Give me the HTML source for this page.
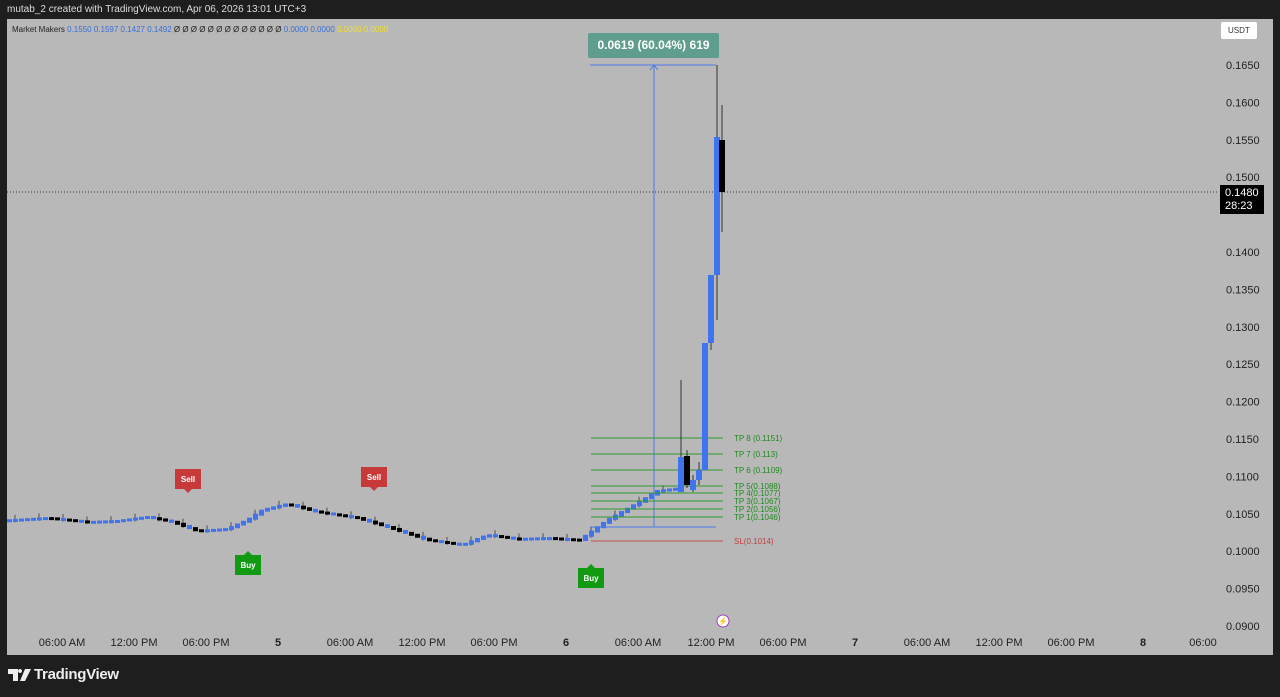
<!DOCTYPE html>
<html><head><meta charset="utf-8"><style>
*{margin:0;padding:0}
body{width:1280px;height:697px;background:#1e1e1e;position:relative;overflow:hidden;font-family:"Liberation Sans",sans-serif}
.t{position:absolute;white-space:nowrap}
</style></head><body>
<div class="t" style="left:7px;top:4px;font-size:10px;color:#ddd">mutab_2 created with TradingView.com, Apr 06, 2026 13:01 UTC+3</div>
<div style="position:absolute;left:7px;top:19px;width:1266px;height:636px;background:#b8b8b8"></div>
<svg id="s" width="1280" height="697" style="position:absolute;left:0;top:0" font-family="Liberation Sans, sans-serif"></svg>
<div class="t" style="left:12px;top:25px;font-size:8px;color:#222">Market Makers <span style="color:#3a6fd8">0.1550 0.1597 0.1427 0.1492</span> Ø Ø Ø Ø Ø Ø Ø Ø Ø Ø Ø Ø Ø <span style="color:#3a6fd8">0.0000 0.0000</span> <span style="color:#f0e020">0.0000 0.0000</span></div>
<div class="t" style="left:1221px;top:22px;width:36px;height:17px;background:#fff;border-radius:2px;font-size:8px;line-height:17px;padding-left:7px;box-sizing:border-box;color:#333">USDT</div>
<div class="t" style="left:588px;top:33px;width:131px;height:25px;background:#5f9e8f;border-radius:2px;color:#fff;font-size:12px;font-weight:bold;line-height:25px;text-align:center">0.0619 (60.04%) 619</div>
<div class="t" style="left:1220px;top:185px;width:44px;height:29px;background:#000;color:#fff;font-size:11px;line-height:13px;padding:2px 0 0 5px;box-sizing:border-box">0.1480<br>28:23</div>
<svg style="position:absolute;left:8px;top:669px" width="24" height="14"><path d="M0 0h10v12h-5v-7h-5z M12 0a2 2 0 1 0 0.1 0z M17 0h6l-6 12h-5z" fill="#eee"/></svg>
<div class="t" style="left:34px;top:666px;color:#eee;font-size:15px;font-weight:bold;letter-spacing:-0.3px">TradingView</div>
<script>
const s=document.getElementById('s');let h='';
const Y=p=>65+(0.165-p)/0.005*37.4;
for(let i=0;i<16;i++){const p=0.165-i*0.005;if(Math.abs(p-0.1450)<1e-6)continue;h+=`<text x="1226" y="${Y(p)+4}" font-size="11" fill="#222">${p.toFixed(4)}</text>`;}
[[62,'06:00 AM'],[134,'12:00 PM'],[206,'06:00 PM'],[278,'5'],[350,'06:00 AM'],[422,'12:00 PM'],[494,'06:00 PM'],[566,'6'],[638,'06:00 AM'],[711,'12:00 PM'],[783,'06:00 PM'],[855,'7'],[927,'06:00 AM'],[999,'12:00 PM'],[1071,'06:00 PM'],[1143,'8'],[1203,'06:00']].forEach(([x,t])=>h+=`<text x="${x}" y="646" font-size="11" fill="#222" text-anchor="middle" ${/^[5-8]$/.test(t)?'font-weight="bold"':''}>${t}</text>`);
h+=`<line x1="7" y1="192" x2="1218" y2="192" stroke="#333" stroke-dasharray="1,2"/>`;
const pts=[[0,521],[50,518],[90,522],[120,521],[150,517],[175,522],[200,531],[230,529],[250,520],[265,510],[290,504],[320,512],[360,518],[390,527],[430,540],[465,545],[490,535],[520,539],[550,538],[582,540],[592,533],[610,520],[640,503],[660,491],[700,486]];
function yat(x){for(let i=0;i<pts.length-1;i++){const[a,b]=pts[i],[c,d]=pts[i+1];if(x>=a&&x<=c)return b+(d-b)*(x-a)/(c-a);}return 486;}
let k=0;for(let x=9;x<=676;x+=6,k++){const y0=yat(x-3),y1=yat(x+3);const up=y1<y0||(k%3==0);const c=up?'#3f73f0':'#000';const t=Math.min(y0,y1)-1,b=Math.max(y0,y1)+1;if(k%4==1)h+=`<line x1="${x}" y1="${t-4}" x2="${x}" y2="${b+1}" stroke="#333" stroke-width="0.8"/>`;h+=`<rect x="${x-2}" y="${t}" width="5" height="${Math.max(3,b-t)}" fill="${c}"/>`;}
h+=`<g stroke="#4a78e8" stroke-width="1"><line x1="654" y1="65" x2="654" y2="527"/><line x1="590" y1="65" x2="716" y2="65"/><line x1="590" y1="527" x2="716" y2="527"/><polyline points="650,70 654,65 658,70" fill="none"/></g>`;
[[438,'TP 8 (0.1151)'],[454,'TP 7 (0.113)'],[470,'TP 6 (0.1109)'],[486,'TP 5(0.1088)'],[493,'TP 4(0.1077)'],[501,'TP 3(0.1067)'],[509,'TP 2(0.1056)'],[517,'TP 1(0.1046)']].forEach(([y,t])=>h+=`<line x1="591" y1="${y}" x2="723" y2="${y}" stroke="#2e9a2e"/><text x="734" y="${y+3}" font-size="8" fill="#1f8a1f">${t}</text>`);
h+=`<line x1="591" y1="541" x2="723" y2="541" stroke="#c05050"/><text x="734" y="544" font-size="8" fill="#c04040">SL(0.1014)</text>`;
[[681,380,457,492,492,'#3f73f0'],[687,450,456,485,488,'#000'],[693,475,480,490,492,'#3f73f0'],[699,462,470,480,485,'#3f73f0'],[705,343,343,470,470,'#3f73f0'],[711,290,275,343,350,'#3f73f0'],[717,65,137,275,320,'#3f73f0'],[722,105,140,192,232,'#000']].forEach(([x,w1,t,b,w2,c])=>h+=`<line x1="${x}" y1="${w1}" x2="${x}" y2="${w2}" stroke="#333"/><rect x="${x-3}" y="${t}" width="6" height="${b-t}" fill="${c}"/>`);
function mk(x,y,c,t,down){let p=down?`M${x-13},${y-10}h26v20h-9l-4,4l-4,-4h-9z`:`M${x-13},${y-10}h9l4,-4l4,4h9v20h-26z`;h+=`<path d="${p}" fill="${c}"/><text x="${x}" y="${y+3}" font-size="8" font-weight="bold" fill="#fff" text-anchor="middle">${t}</text>`;}
mk(188,479,'#c83a3a','Sell',1);mk(374,477,'#c83a3a','Sell',1);mk(248,565,'#139a13','Buy',0);mk(591,578,'#139a13','Buy',0);
h+=`<circle cx="723" cy="621" r="6" fill="#fff" stroke="#a040c0"/><text x="723" y="624" font-size="8" fill="#a040c0" text-anchor="middle">⚡</text>`;
s.innerHTML=h;
</script>
</body></html>
